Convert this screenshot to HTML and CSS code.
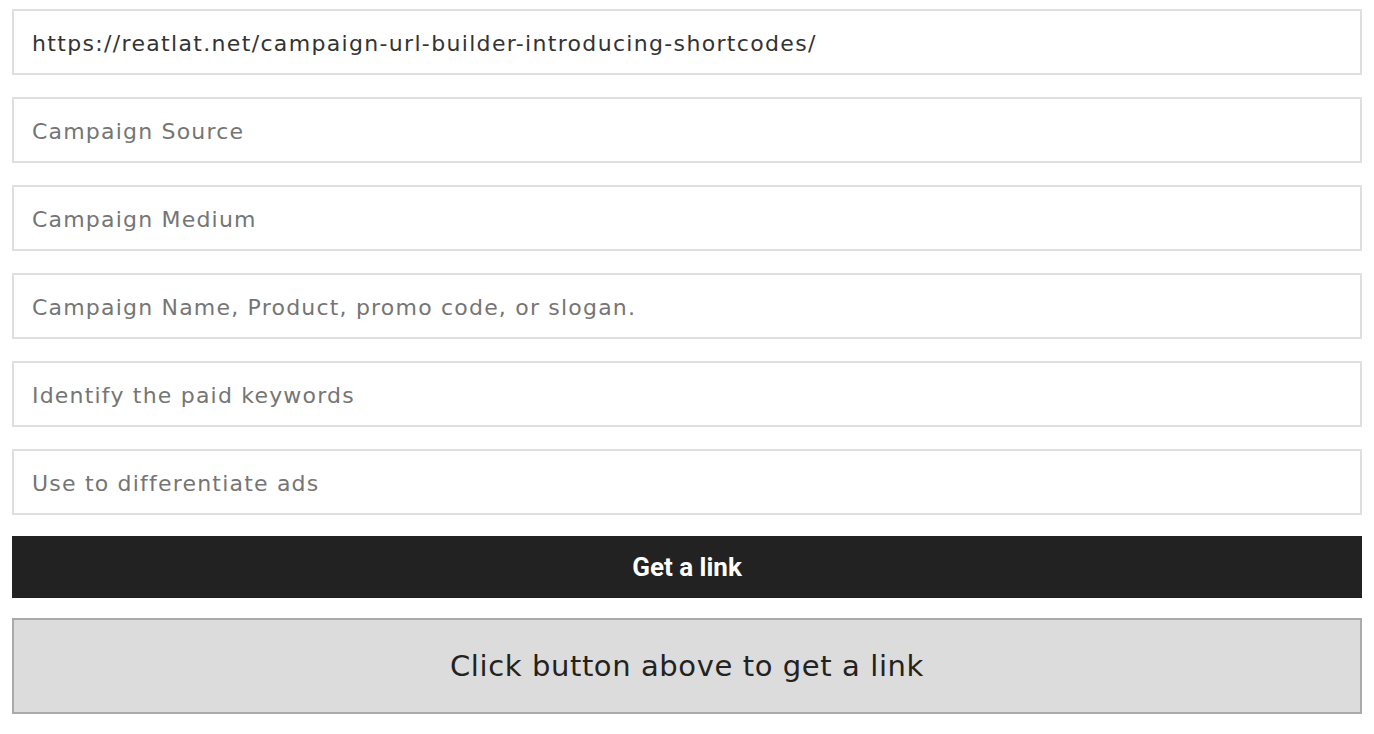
FILE: index.html
```html
<!DOCTYPE html>
<html lang="en">
<head>
<meta charset="utf-8">
<title>Campaign URL Builder</title>
<link rel="stylesheet" href="styles.css">
</head>
<body>
<form class="builder">
  <input class="field" type="text" value="https://reatlat.net/campaign-url-builder-introducing-shortcodes/">
  <input class="field" type="text" placeholder="Campaign Source">
  <input class="field" type="text" placeholder="Campaign Medium">
  <input class="field" type="text" placeholder="Campaign Name, Product, promo code, or slogan.">
  <input class="field" type="text" placeholder="Identify the paid keywords">
  <input class="field" type="text" placeholder="Use to differentiate ads">
  <button class="submit" type="button">Get a link</button>
  <div class="result">Click button above to get a link</div>
</form>
</body>
</html>
```
FILE: styles.css
```css
html, body {
  margin: 0;
  padding: 0;
  background: #fff;
}
.builder {
  display: flex;
  flex-direction: column;
  padding: 9px 12px 20px;
}
.field {
  box-sizing: border-box;
  height: 66px;
  margin: 0 0 22px;
  padding: 2px 18px 0;
  border: 2px solid #dfdfdf;
  background: #fff;
  font-family: "DejaVu Sans", Verdana, sans-serif;
  font-size: 22px;
  letter-spacing: 1.33px;
  color: #333;
  outline: none;
}
.field::placeholder {
  color: #757575;
  letter-spacing: 1.2px;
}
.builder .field:last-of-type {
  margin-bottom: 21px;
}
.submit {
  height: 62px;
  margin: 0 0 20px;
  padding: 0;
  border: 0;
  background: #222;
  color: #fff;
  font-family: Roboto, "Liberation Sans", sans-serif;
  font-weight: 700;
  font-size: 26px;
  cursor: pointer;
}
.result {
  box-sizing: border-box;
  height: 96px;
  display: flex;
  align-items: center;
  justify-content: center;
  border: 2px solid #aaa;
  background: #dcdcdc;
  color: #222;
  font-family: "DejaVu Sans", Verdana, sans-serif;
  font-size: 29px;
  letter-spacing: 0.6px;
}
```
